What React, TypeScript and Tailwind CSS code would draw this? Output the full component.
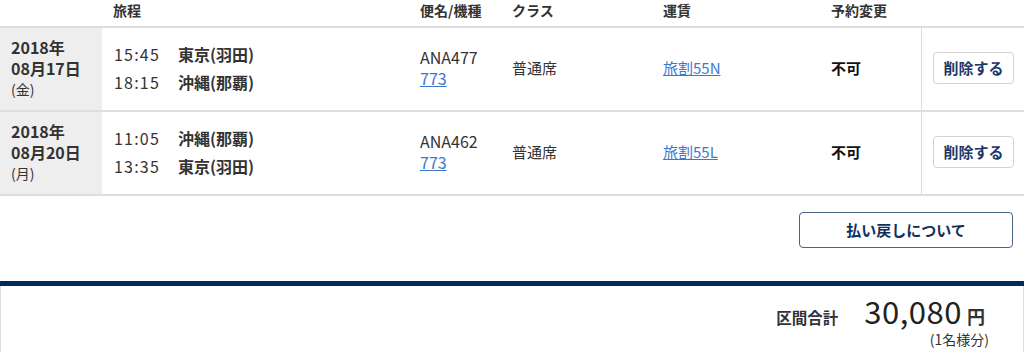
import React from "react";

type Flight = {
  year: string;
  date: string;
  weekday: string;
  legs: { time: string; place: string }[];
  flightNo: string;
  aircraft: string;
  seat: string;
  fare: string;
  change: string;
};

const flights: Flight[] = [
  {
    year: "2018年",
    date: "08月17日",
    weekday: "(金)",
    legs: [
      { time: "15:45", place: "東京(羽田)" },
      { time: "18:15", place: "沖縄(那覇)" },
    ],
    flightNo: "ANA477",
    aircraft: "773",
    seat: "普通席",
    fare: "旅割55N",
    change: "不可",
  },
  {
    year: "2018年",
    date: "08月20日",
    weekday: "(月)",
    legs: [
      { time: "11:05", place: "沖縄(那覇)" },
      { time: "13:35", place: "東京(羽田)" },
    ],
    flightNo: "ANA462",
    aircraft: "773",
    seat: "普通席",
    fare: "旅割55L",
    change: "不可",
  },
];

function FlightRow({ f }: { f: Flight }) {
  return (
    <div className="flex h-[84px] border-b-2 border-[#dedede]">
      <div className="flex w-[102px] flex-col justify-center bg-[#eeeeee] pb-[2px] pl-[11px]">
        <span className="text-[16px] font-bold leading-[21px]">{f.year}</span>
        <span className="text-[16px] font-bold leading-[21px]">{f.date}</span>
        <span className="text-[14px] leading-[21px]">{f.weekday}</span>
      </div>
      <div className="flex w-[318px] flex-col justify-center gap-[6px] pb-[2px] pl-3">
        {f.legs.map(leg => (
          <div key={leg.time} className="flex items-center leading-[22px]">
            <span className="w-[64px] text-[16px] tracking-[1.2px]">{leg.time}</span>
            <span className="text-[16px] font-bold">{leg.place}</span>
          </div>
        ))}
      </div>
      <div className="flex w-[92px] flex-col justify-center pb-[3px] text-[16px] leading-[21px]">
        <span>{f.flightNo}</span>
        <a href="#" className="text-[#3a78d0] underline">
          {f.aircraft}
        </a>
      </div>
      <div className="flex w-[151px] items-center pb-[2px] text-[15px]">{f.seat}</div>
      <div className="flex w-[168px] items-center pb-[2px] text-[15px]">
        <a href="#" className="text-[#3a78d0] underline">
          {f.fare}
        </a>
      </div>
      <div className="flex w-[90px] items-center pb-[2px] text-[15px] font-bold text-[#111]">{f.change}</div>
      <div className="flex flex-1 items-center border-l border-[#dcdcdc] pb-[2px] pl-[11px]">
        <button className="h-[32px] w-[81px] rounded-[4px] border border-[#d4d4d4] bg-white text-[15px] font-bold text-[#1b3866]">
          削除する
        </button>
      </div>
    </div>
  );
}

export default function App() {
  return (
    <div
      className="h-[352px] w-[1024px] overflow-hidden bg-white text-[#333]"
      style={{ fontFamily: '"Noto Sans CJK JP", "Noto Sans", sans-serif' }}
    >
      <div className="flex h-[28px] items-start border-b-2 border-[#dedede] text-[14px] font-bold leading-[20px]">
        <div className="w-[113px]" />
        <div className="w-[307px]">旅程</div>
        <div className="w-[92px]">便名/機種</div>
        <div className="w-[151px]">クラス</div>
        <div className="w-[168px]">運賃</div>
        <div>予約変更</div>
      </div>

      {flights.map(f => (
        <FlightRow key={f.flightNo} f={f} />
      ))}

      <div className="flex justify-end pt-[16px] pr-[11px] pb-[33px]">
        <button className="h-[36px] w-[214px] rounded-[4px] border-[1.5px] border-[#4b6384] bg-white text-[15px] font-bold text-[#10305c]">
          払い戻しについて
        </button>
      </div>

      <div className="h-[5px] bg-[#002b60]" />

      <div className="flex h-[66px] flex-col items-end border-x border-[#dddddd] pt-[9px] pr-[34px]">
        <div className="flex h-[32px] items-baseline leading-[32px]">
          <span className="text-[15.5px] font-bold">区間合計</span>
          <span className="ml-[26px] text-[31px] tracking-[0.5px] text-[#222]">30,080</span>
          <span className="mr-[4px] ml-[5px] text-[18px] font-bold">円</span>
        </div>
        <span className="mt-[2px] text-[14px] leading-[20px]">(1名様分)</span>
      </div>
    </div>
  );
}
